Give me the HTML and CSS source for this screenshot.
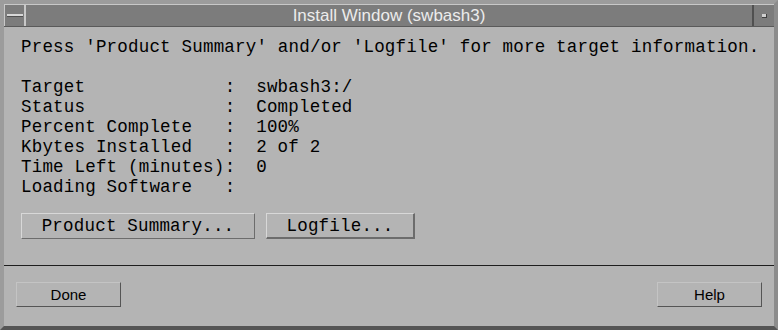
FILE: index.html
```html
<!DOCTYPE html>
<html>
<head>
<meta charset="utf-8">
<link rel="stylesheet" href="styles.css">
</head>
<body>
<div class="window">
  <div class="titlebar">
    <div class="tb-btn tb-menu"><span class="menu-bar"></span></div>
    <div class="tb-title">Install Window (swbash3)</div>
    <div class="tb-btn tb-max"><span class="max-box"></span></div>
  </div>
  <div class="body">
    <div class="content">
      <p class="intro">Press 'Product Summary' and/or 'Logfile' for more target information.</p>
      <div class="info">
        <div class="row"><span class="label">Target</span><span class="colon">:</span><span class="value">swbash3:/</span></div>
        <div class="row"><span class="label">Status</span><span class="colon">:</span><span class="value">Completed</span></div>
        <div class="row"><span class="label">Percent Complete</span><span class="colon">:</span><span class="value">100%</span></div>
        <div class="row"><span class="label">Kbytes Installed</span><span class="colon">:</span><span class="value">2 of 2</span></div>
        <div class="row"><span class="label">Time Left (minutes)</span><span class="colon">:</span><span class="value">0</span></div>
        <div class="row"><span class="label">Loading Software</span><span class="colon">:</span><span class="value"></span></div>
      </div>
      <div class="buttons">
        <button class="btn mono btn-summary">Product Summary...</button>
        <button class="btn mono btn-log">Logfile...</button>
      </div>
    </div>
    <div class="separator"></div>
    <div class="actions">
      <button class="btn sans btn-action">Done</button>
      <button class="btn sans btn-action">Help</button>
    </div>
  </div>
</div>
</body>
</html>
```

FILE: styles.css
```css
html, body {
  margin: 0;
  padding: 0;
  background: #b4b4b4;
}

.window {
  width: 778px;
  height: 330px;
  box-sizing: border-box;
  background: #b4b4b4;
  border-top: 4px solid #9c9c9c;
  border-left: 4px solid #9c9c9c;
  border-right: 4px solid #8c8c8c;
  border-bottom: 4px solid #555555;
  display: flex;
  flex-direction: column;
}

.titlebar {
  height: 23px;
  display: flex;
  background: #7c7c7c;
  border-top: 1px solid #c8c8c8;
  box-sizing: border-box;
  border-bottom: 1px solid #5a5a5a;
}

.tb-btn {
  width: 22px;
  flex: none;
  display: flex;
  align-items: center;
  justify-content: center;
  box-sizing: border-box;
}

.tb-menu {
  border-right: 2px solid #c8c8c8;
  border-left: 1px solid #c8c8c8;
}

.menu-bar {
  width: 16px;
  height: 2px;
  background: #d8d8d8;
  border-bottom: 1px solid #505050;
}

.tb-max {
  border-left: 2px solid #505050;
}

.max-box {
  width: 4px;
  height: 3px;
  background: #d0d0d0;
  border-bottom: 1px solid #404040;
  border-right: 1px solid #404040;
}

.tb-title {
  flex: 1;
  text-align: center;
  font-family: "Liberation Sans", Arial, sans-serif;
  font-size: 17px;
  line-height: 21px;
  color: #ececec;
}

.body {
  flex: 1;
  display: flex;
  flex-direction: column;
}

.content {
  padding: 10px 0 0 17px;
  font-family: "Liberation Mono", "Courier New", monospace;
  font-size: 17.5px;
  letter-spacing: 0.2px;
  line-height: 20px;
  color: #000;
}

.intro {
  margin: 0 0 20px 0;
  white-space: pre;
}

.row {
  display: flex;
  white-space: pre;
  height: 20px;
}

.label {
  width: 19.4ch;
}

.colon {
  width: 3ch;
}

.buttons {
  display: flex;
  gap: 11px;
  margin-top: 16px;
  margin-left: 0;
}

.btn {
  background: #b4b4b4;
  color: #000;
  padding: 0;
  margin: 0;
  box-sizing: border-box;
  border-top: 1px solid #d8d8d8;
  border-left: 1px solid #d8d8d8;
  border-right: 1px solid #6c6c6c;
  border-bottom: 1px solid #6c6c6c;
}

.mono {
  font-family: "Liberation Mono", "Courier New", monospace;
  font-size: 17.5px;
  letter-spacing: 0.2px;
  height: 26px;
  line-height: 22px;
}

.btn-summary {
  width: 234px;
}

.btn-log {
  width: 149px;
  border-right: 2px solid #6c6c6c;
  border-bottom: 2px solid #6c6c6c;
}

.separator {
  margin-top: 26px;
  height: 1px;
  background: #1e1e1e;
}

.actions {
  display: flex;
  justify-content: space-between;
  padding: 16px 12px 0 12px;
}

.sans {
  font-family: "Liberation Sans", Arial, sans-serif;
  font-size: 15px;
}

.btn-action {
  width: 105px;
  height: 25px;
  border-right: 1px solid #555;
  border-bottom: 1px solid #555;
  border-top: 1px solid #c4c4c4;
  border-left: 1px solid #c4c4c4;
}
```
